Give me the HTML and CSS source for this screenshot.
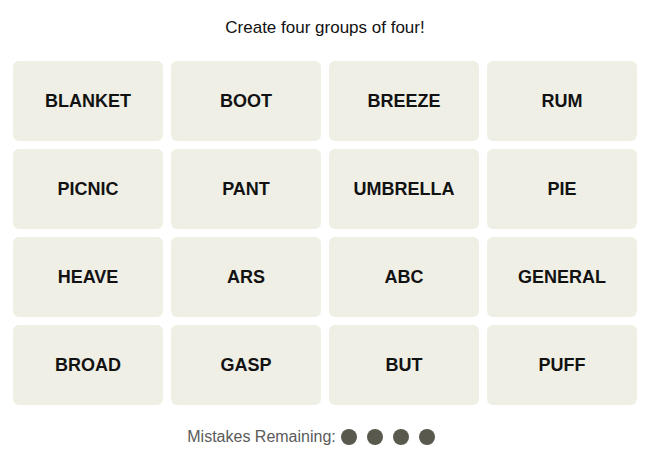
FILE: index.html
```html
<!DOCTYPE html>
<html>
<head>
<meta charset="utf-8">
<link rel="stylesheet" href="styles.css">
</head>
<body>
<main class="game">
  <p class="prompt">Create four groups of four!</p>
  <div class="board">
    <div class="tile">BLANKET</div>
    <div class="tile">BOOT</div>
    <div class="tile">BREEZE</div>
    <div class="tile">RUM</div>
    <div class="tile">PICNIC</div>
    <div class="tile">PANT</div>
    <div class="tile">UMBRELLA</div>
    <div class="tile">PIE</div>
    <div class="tile">HEAVE</div>
    <div class="tile">ARS</div>
    <div class="tile">ABC</div>
    <div class="tile">GENERAL</div>
    <div class="tile">BROAD</div>
    <div class="tile">GASP</div>
    <div class="tile">BUT</div>
    <div class="tile">PUFF</div>
  </div>
  <div class="mistakes">
    <span class="mistakes-label">Mistakes Remaining:</span>
    <span class="dots">
      <span class="dot"></span><span class="dot"></span><span class="dot"></span><span class="dot"></span>
    </span>
  </div>
</main>
</body>
</html>
```
FILE: styles.css
```css
html, body {
  margin: 0;
  padding: 0;
  background: #ffffff;
}
body {
  font-family: "Liberation Sans", Arial, sans-serif;
  color: #121212;
}
.game {
  width: 624px;
  padding: 0 10px 0 13px;
  display: flex;
  flex-direction: column;
  align-items: center;
}
.prompt {
  margin: 18px 0 0 0;
  height: 20px;
  line-height: 20px;
  font-size: 17px;
  color: #121212;
}
.board {
  margin-top: 23px;
  width: 624px;
  display: grid;
  grid-template-columns: repeat(4, 150px);
  grid-auto-rows: 80px;
  gap: 8px;
}
.tile {
  background: #efefe6;
  border-radius: 6px;
  display: flex;
  align-items: center;
  justify-content: center;
  font-weight: 700;
  font-size: 18px;
  color: #121212;
}
.mistakes {
  margin-top: 22px;
  padding-right: 28px;
  display: flex;
  align-items: center;
  height: 20px;
  font-size: 16px;
  color: #5a5a5a;
}
.mistakes-label {
  margin-right: 5px;
}
.dots {
  display: flex;
  gap: 10px;
}
.dot {
  width: 16px;
  height: 16px;
  border-radius: 50%;
  background: #5a594e;
}
```
